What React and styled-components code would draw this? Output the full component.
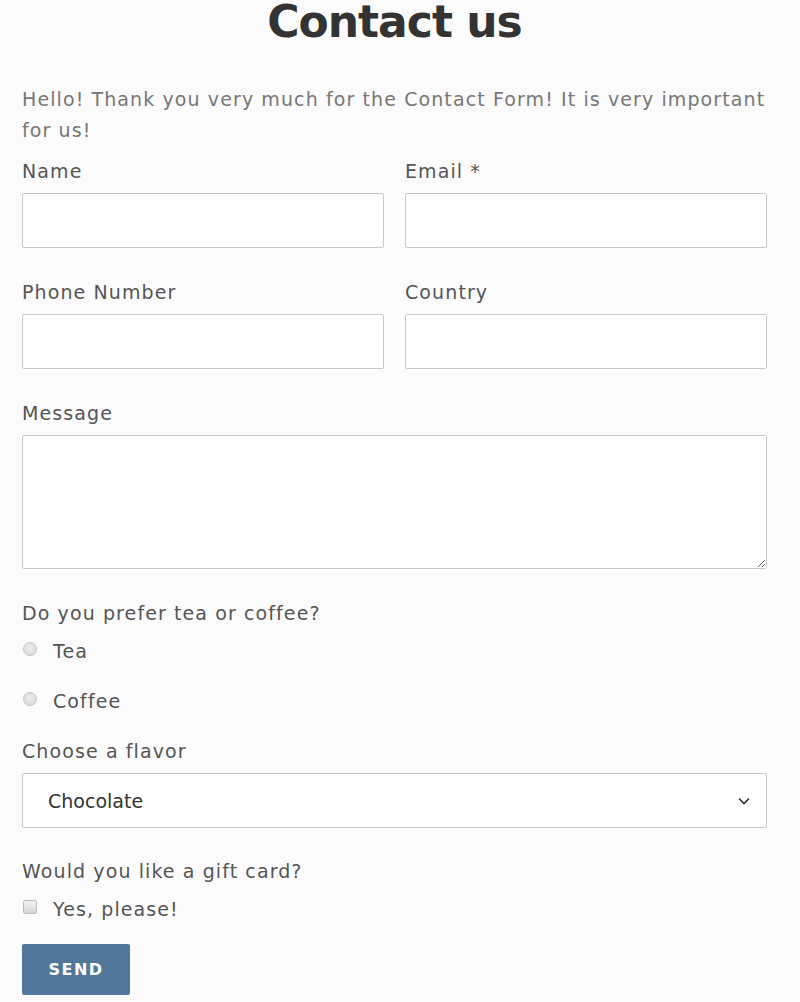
import React from 'react'
import styled, { createGlobalStyle } from 'styled-components'

const GlobalStyle = createGlobalStyle`
  html, body {
    margin: 0;
    padding: 0;
    background: #fbfbfb;
  }
  body {
    font-family: "DejaVu Sans", "Open Sans", sans-serif;
    color: #555;
  }
`

const Page = styled.div`
  width: 745px;
  margin-left: 22px;
  padding-bottom: 7px;
`

const Title = styled.h1`
  margin: 0;
  text-align: center;
  font-size: 44px;
  line-height: 44px;
  font-weight: 700;
  letter-spacing: -1px;
  color: #333;
`

const Intro = styled.p`
  margin: 40px 0 0;
  font-size: 19px;
  line-height: 31px;
  letter-spacing: 1.1px;
  color: #777;
`

const Form = styled.form`
  display: flex;
  flex-direction: column;
  font-size: 19px;
  letter-spacing: 1.1px;
`

const Row = styled.div`
  display: grid;
  grid-template-columns: 1fr 1fr;
  column-gap: 21px;
  margin-top: ${p => p.$top || 32}px;
`

const Field = styled.div`
  display: flex;
  flex-direction: column;
  margin-top: ${p => p.$top || 0}px;
`

const Label = styled.label`
  line-height: 24px;
  color: #555;
  margin-bottom: 10px;
`

const TextInput = styled.input`
  box-sizing: border-box;
  height: 55px;
  border: 1px solid #c8c8c8;
  border-radius: 2px;
  background: #fff;
  font: inherit;
  padding: 0 14px;
`

const TextArea = styled.textarea`
  box-sizing: border-box;
  height: 134px;
  border: 1px solid #c8c8c8;
  border-radius: 2px;
  background: #fff;
  font: inherit;
  padding: 10px 14px;
`

const Choice = styled.label`
  display: flex;
  align-items: center;
  gap: 16px;
  height: 24px;
  margin-top: ${p => p.$top || 0}px;
  color: #555;
`

const Radio = styled.input.attrs({ type: 'radio' })`
  appearance: none;
  margin: 0 0 4px 1px;
  width: 14px;
  height: 14px;
  border-radius: 50%;
  border: 1px solid #c4c4c4;
  background: radial-gradient(circle at 50% 40%, #eee, #d4d4d4);
`

const Check = styled.input.attrs({ type: 'checkbox' })`
  appearance: none;
  margin: 0 0 4px 1px;
  width: 14px;
  height: 14px;
  border-radius: 2px;
  border: 1px solid #bcbcbc;
  background: linear-gradient(#f2f2f2, #d6d6d6);
`

const SelectWrap = styled.div`
  position: relative;
  height: 55px;
`

const Select = styled.select`
  appearance: none;
  box-sizing: border-box;
  width: 100%;
  height: 55px;
  border: 1px solid #c8c8c8;
  border-radius: 2px;
  background: #fff;
  font: inherit;
  color: #333;
  padding: 0 25px;
`

const Chevron = styled.svg`
  position: absolute;
  right: 16px;
  top: 21px;
  pointer-events: none;
`

const SendButton = styled.button`
  align-self: flex-start;
  margin-top: 23px;
  width: 108px;
  height: 51px;
  border: none;
  border-radius: 2px;
  background: #51789a;
  color: #fff;
  font-family: "DejaVu Sans", sans-serif;
  font-weight: 700;
  font-size: 16px;
  letter-spacing: 1.5px;
`

export default function App() {
  return (
    <Page>
      <GlobalStyle />
      <Title>Contact us</Title>
      <Intro>Hello! Thank you very much for the Contact Form! It is very important for us!</Intro>
      <Form onSubmit={e => e.preventDefault()}>
        <Row $top={13}>
          <Field>
            <Label>Name</Label>
            <TextInput />
          </Field>
          <Field>
            <Label>Email *</Label>
            <TextInput type="email" />
          </Field>
        </Row>
        <Row>
          <Field>
            <Label>Phone Number</Label>
            <TextInput />
          </Field>
          <Field>
            <Label>Country</Label>
            <TextInput />
          </Field>
        </Row>
        <Field $top={32}>
          <Label>Message</Label>
          <TextArea />
        </Field>
        <Field $top={32}>
          <Label>Do you prefer tea or coffee?</Label>
        </Field>
        <Choice $top={4}>
          <Radio name="drink" /> Tea
        </Choice>
        <Choice $top={26}>
          <Radio name="drink" /> Coffee
        </Choice>
        <Field $top={26}>
          <Label>Choose a flavor</Label>
          <SelectWrap>
            <Select defaultValue="Chocolate">
              <option>Chocolate</option>
              <option>Vanilla</option>
              <option>Strawberry</option>
            </Select>
            <Chevron width="14" height="14" viewBox="0 0 14 14">
              <path d="M2 4.5 L7 9.5 L12 4.5" fill="none" stroke="#333" strokeWidth="1.6" />
            </Chevron>
          </SelectWrap>
        </Field>
        <Field $top={31}>
          <Label>Would you like a gift card?</Label>
        </Field>
        <Choice $top={4}>
          <Check /> Yes, please!
        </Choice>
        <SendButton type="submit">SEND</SendButton>
      </Form>
    </Page>
  )
}
